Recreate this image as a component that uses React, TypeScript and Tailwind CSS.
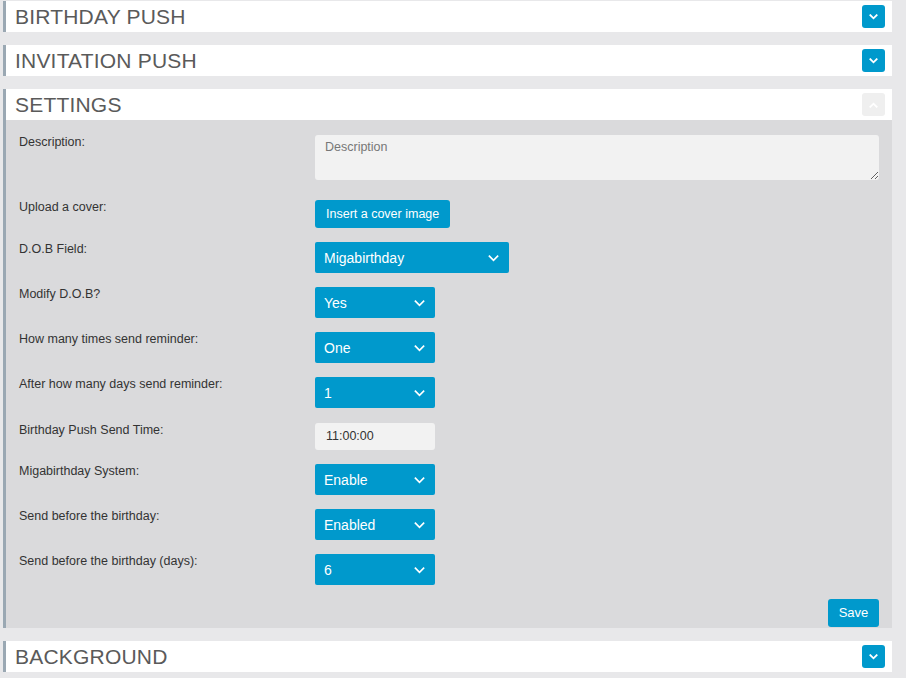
import React from "react";

const font = { fontFamily: '"Liberation Sans", Arial, sans-serif' };

function Chevron({ up = false, className = "", sw = 2 }: { up?: boolean; className?: string; sw?: number }) {
  return (
    <svg viewBox="0 0 10 6" className={className} fill="none" stroke="currentColor" strokeWidth={sw} strokeLinecap="square">
      {up ? <path d="M1.5 5 L5 1.5 L8.5 5" /> : <path d="M1.5 1 L5 4.5 L8.5 1" />}
    </svg>
  );
}

function Header({ title, open = false }: { title: string; open?: boolean }) {
  return (
    <div className="h-[31px] bg-white flex items-center justify-between pl-[9px] pr-[7px]">
      <span className="text-[21px] leading-none text-[#5a5a5a] tracking-[0.2px]">{title}</span>
      {open ? (
        <div className="w-[23px] h-[23px] rounded-[3px] bg-[#efefef] flex items-center justify-center text-white">
          <Chevron up className="w-[9px] h-[6px]" />
        </div>
      ) : (
        <div className="w-[23px] h-[23px] rounded-[3px] bg-[#0099cc] flex items-center justify-center text-white">
          <Chevron className="w-[9px] h-[6px]" />
        </div>
      )}
    </div>
  );
}

function Select({ value, wide = false }: { value: string; wide?: boolean }) {
  return (
    <div
      className={`relative h-[31px] ${wide ? "w-[194px]" : "w-[120px]"} rounded-[2px] bg-[#0099cc] text-white flex items-center pl-[9px] pt-px text-[14px]`}
    >
      <span>{value}</span>
      <Chevron sw={1.4} className="absolute right-[9px] top-[13px] w-[13px] h-[7px]" />
    </div>
  );
}

function Row({ label, children, mb = "mb-[14px]" }: { label: string; children: React.ReactNode; mb?: string }) {
  return (
    <div className={`flex items-start ${mb}`}>
      <div className="w-[296px] shrink-0 text-[12.5px] leading-[14px] text-[#333333]">{label}</div>
      <div className="flex-1">{children}</div>
    </div>
  );
}

export default function App() {
  return (
    <div style={font} className="min-h-[678px] bg-[#e8e8ea] pt-px pl-[3px] pr-[14px]">
      <div className="border-l-[3px] border-[#9aa8b3] mb-[13px]">
        <Header title="BIRTHDAY PUSH" />
      </div>
      <div className="border-l-[3px] border-[#9aa8b3] mb-[13px]">
        <Header title="INVITATION PUSH" />
      </div>
      <div className="border-l-[3px] border-[#9aa8b3] mb-[13px]">
        <Header title="SETTINGS" open />
        <div className="bg-[#dadadc] pt-[15px] pl-[13px] pr-[13px] pb-px">
          <Row label="Description:" mb="mb-[20px]">
            <textarea
              placeholder="Description"
              className="block w-full h-[45px] rounded-[3px] bg-[#f2f2f2] pl-[10px] pt-[3px] text-[12.5px] text-[#333] placeholder:text-[#777777] outline-none resize-y"
              style={font}
            />
          </Row>
          <Row label="Upload a cover:">
            <button className="h-[28px] px-[11px] rounded-[3px] bg-[#0099cc] text-white text-[12.5px]" style={font}>
              Insert a cover image
            </button>
          </Row>
          <Row label="D.O.B Field:">
            <Select value="Migabirthday" wide />
          </Row>
          <Row label="Modify D.O.B?">
            <Select value="Yes" />
          </Row>
          <Row label="How many times send reminder:">
            <Select value="One" />
          </Row>
          <Row label="After how many days send reminder:" mb="mb-[15px]">
            <Select value="1" />
          </Row>
          <Row label="Birthday Push Send Time:">
            <div className="h-[27px] w-[120px] rounded-[3px] bg-[#f2f2f2] flex items-center pl-[11px] text-[12.5px] text-[#333333]">
              11:00:00
            </div>
          </Row>
          <Row label="Migabirthday System:">
            <Select value="Enable" />
          </Row>
          <Row label="Send before the birthday:">
            <Select value="Enabled" />
          </Row>
          <Row label="Send before the birthday (days):">
            <Select value="6" />
          </Row>
          <div className="flex justify-end">
            <button className="h-[28px] w-[51px] rounded-[3px] bg-[#0099cc] text-white text-[13px]" style={font}>
              Save
            </button>
          </div>
        </div>
      </div>
      <div className="border-l-[3px] border-[#9aa8b3]">
        <Header title="BACKGROUND" />
      </div>
    </div>
  );
}
